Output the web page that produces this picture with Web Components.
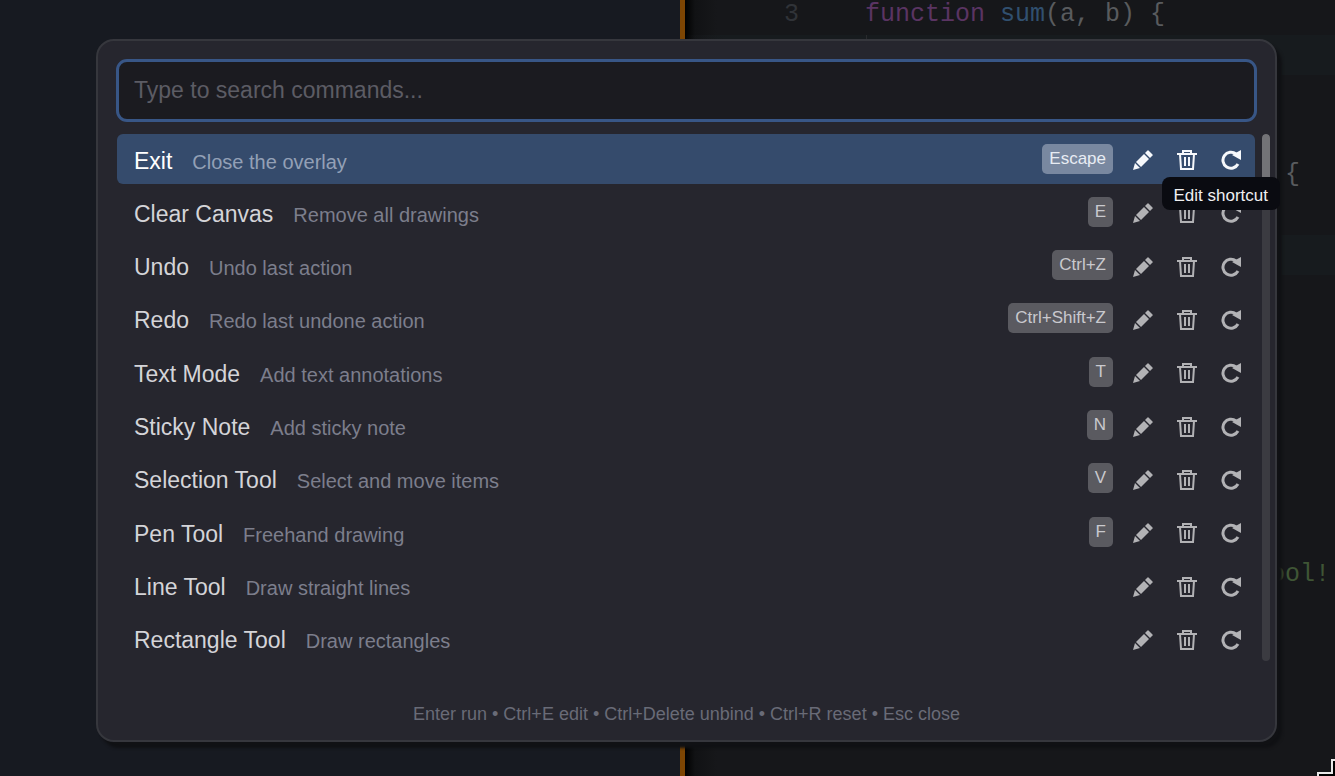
<!DOCTYPE html>
<html lang="en">
<head>
<meta charset="utf-8">
<title>Command palette</title>
<style>
html, body { margin: 0; height: 100%; }
body { font-family: "Liberation Sans", Arial, sans-serif; background: #171a21; overflow: hidden; }
</style>
</head>
<body>
<overlay-app></overlay-app>
<script>
const define = (name, html, setup) => customElements.define(name, class extends HTMLElement {
  connectedCallback() {
    if (this.shadowRoot) return;
    this.attachShadow({ mode: 'open' }).innerHTML = html;
    if (setup) setup(this, this.shadowRoot);
  }
});

const icons = {
  edit: '<path d="M0 20l2-7 5 5z"/><path d="M3 12l8-8 5 5-8 8z"/><path d="M12 3l2.500-2.500q.5-.5 1 0l4 4q.5.5 0 1L17 8z"/>',
  unbind: '<path fill="none" stroke="currentColor" stroke-width="2" d="M0 4h20M6 3V1h8v2M3 4l1 15h12l1-15"/><path fill="none" stroke="currentColor" stroke-width="2" d="M8 7v9M12 7v9"/>',
  reset: '<path fill="none" stroke="currentColor" stroke-width="3" d="M15 4A8 8 0 1 0 17 14"/><path d="M20 0v10l-9-5z"/>'
};

define('icon-button', `<style>
  :host { display: block; }
  button { display: grid; place-items: center; width: 36px; height: 36px; padding: 0; border: 0; background: none; color: inherit; }
  svg { width: 20px; height: 20px; fill: currentColor; }
</style><button type="button"><svg viewBox="0 0 20 20" aria-hidden="true"></svg></button>`, (el, root) => {
  root.querySelector('svg').innerHTML = icons[el.getAttribute('kind')];
  root.querySelector('button').setAttribute('aria-label', el.getAttribute('label'));
});

define('key-badge', `<style>
  :host { display: block; box-sizing: border-box; height: 30px; margin-bottom: 1px; padding: 0 7px; border-radius: 5px;
    background: var(--badge-bg, #5a5a60); color: var(--badge-fg, #c9c9ce); font-size: 17px; line-height: 30px; }
</style><slot></slot>`);

define('command-row', `<style>
  :host { display: flex; align-items: center; position: relative; box-sizing: border-box; height: 50px; padding: 0 6px 0 17px;
    border-radius: 6px; color: #d4d4d8; --desc: #7c7e8c; --icon: #b2b2b5; }
  :host([selected]) { background: #354b6c; color: #fff; --desc: #93a0b6; --icon: #f6f8fb; --badge-bg: #7988a0; --badge-fg: #e8ecf3; }
  .text { display: flex; flex: 1; align-items: baseline; gap: 20px; white-space: nowrap; padding-top: 4px; }
  .name { font-size: 23px; line-height: 28px; }
  .desc { font-size: 20px; line-height: 28px; color: var(--desc); }
  .actions { display: flex; gap: 8px; margin-left: 12px; padding-top: 2px; color: var(--icon); }
  ::slotted([slot=tip]) { position: absolute; z-index: 2; right: -25px; top: 43px; }
</style><div class="text"><span class="name"></span><span class="desc"></span></div>
<slot></slot>
<div class="actions"><icon-button kind="edit" label="Edit shortcut"></icon-button><icon-button kind="unbind" label="Unbind shortcut"></icon-button><icon-button kind="reset" label="Reset shortcut"></icon-button></div>
<slot name="tip"></slot>`, (el, root) => {
  root.querySelector('.name').textContent = el.getAttribute('name');
  root.querySelector('.desc').textContent = el.getAttribute('desc');
});

define('tool-tip', `<style>
  :host { display: block; padding: 7px 12px 2px; border-radius: 8px; background: #0a0b11; color: #f0f0f2;
    font-size: 17px; line-height: 24px; white-space: nowrap; }
</style><slot></slot>`);

define('search-field', `<style>
  :host { display: block; }
  input { display: block; box-sizing: border-box; width: 100%; height: 63px; padding: 0 15px; border: 3px solid #385686; border-radius: 11px;
    background: #1b1b20; color: #d4d4d8; font: 23px "Liberation Sans", Arial, sans-serif; outline: 0; }
  input::placeholder { color: #5c5c64; opacity: 1; }
</style><input type="text" aria-label="Search commands" placeholder="Type to search commands...">`);

define('scroll-track', `<style>
  :host { display: block; width: 8px; height: 527px; border-radius: 4px; background: #3b3b41; overflow: hidden; }
  div { height: 64px; border-radius: 4px; background: #737377; }
</style><div></div>`);

define('command-palette', `<style>
  :host { display: block; box-sizing: border-box; padding: 18px 18px 0; border: 2px solid #36373d; border-radius: 18px;
    background: #26262e; box-shadow: 5px 6px 3px #101114; }
  .body { display: flex; justify-content: space-between; gap: 7px; margin: 12px -13px 0 0; }
  .list { display: flex; flex: 1; flex-direction: column; justify-content: space-between; height: 530px; margin-left: 1px; }
  footer { margin-top: 36px; padding-bottom: 12px; text-align: center; font-size: 18px; line-height: 28px; color: #696b77; }
</style>
<search-field></search-field>
<div class="body"><div class="list"><slot></slot></div><scroll-track></scroll-track></div>
<footer>Enter run • Ctrl+E edit • Ctrl+Delete unbind • Ctrl+R reset • Esc close</footer>`);

define('code-line', `<style>
  :host { display: flex; flex: none; height: 40px; line-height: 40px; white-space: pre; }
  .no { box-sizing: border-box; width: 180px; padding-left: 99px; color: #303338; }
</style><span class="no"></span><div><slot></slot></div>`, (el, root) => {
  root.querySelector('.no').textContent = el.getAttribute('no') || '';
});

define('code-backdrop', `<style>
  :host { display: grid; grid-template-columns: 685px 1fr; height: 100%; font: 25px "Liberation Mono", monospace; color: #595b5e; }
  .left { border-right: 5px solid #7d4503; background: #171a21; }
  .code { overflow: hidden; background: linear-gradient(90deg, #000, #111214 10px, #16171a 32px); }
  .lines { display: flex; flex-direction: column; margin-top: -5px; }
  .kw { color: #5a3462; } .fn { color: #31506f; } .str { color: #3f5535; padding-left: 27ch; }
  .far { padding-left: 28ch; }
  .hl { background: linear-gradient(90deg, transparent, #171b1e 40px); }
  .guide { display: block; width: 1px; height: 40px; margin-left: 1px; background: #292a2d; }
</style>
<div class="left"></div>
<div class="code"><div class="lines">
<code-line no="3"><span class="kw">function</span> <span class="fn">sum</span>(a, b) {</code-line>
<code-line class="hl"><span class="guide"></span></code-line>
<code-line></code-line><code-line></code-line>
<code-line><span class="far">{</span></code-line>
<code-line></code-line>
<code-line class="hl"></code-line>
<code-line></code-line><code-line></code-line><code-line></code-line><code-line></code-line><code-line></code-line><code-line></code-line><code-line></code-line>
<code-line><span class="str">ool!</span></code-line>
</div></div>`);

define('overlay-app', `<style>
  :host { display: grid; height: 100vh; overflow: hidden; position: relative; }
  code-backdrop, .stage { grid-area: 1 / 1; min-width: 0; min-height: 0; }
  .stage { z-index: 1; padding: 39px 58px 0 96px; }
  .corner { position: absolute; right: 0; bottom: 0; width: 18px; height: 17px; z-index: 3; }
</style>
<code-backdrop></code-backdrop>
<div class="stage"><command-palette>
<command-row selected name="Exit" desc="Close the overlay"><key-badge>Escape</key-badge><tool-tip slot="tip" role="tooltip">Edit shortcut</tool-tip></command-row>
<command-row name="Clear Canvas" desc="Remove all drawings"><key-badge>E</key-badge></command-row>
<command-row name="Undo" desc="Undo last action"><key-badge>Ctrl+Z</key-badge></command-row>
<command-row name="Redo" desc="Redo last undone action"><key-badge>Ctrl+Shift+Z</key-badge></command-row>
<command-row name="Text Mode" desc="Add text annotations"><key-badge>T</key-badge></command-row>
<command-row name="Sticky Note" desc="Add sticky note"><key-badge>N</key-badge></command-row>
<command-row name="Selection Tool" desc="Select and move items"><key-badge>V</key-badge></command-row>
<command-row name="Pen Tool" desc="Freehand drawing"><key-badge>F</key-badge></command-row>
<command-row name="Line Tool" desc="Draw straight lines"></command-row>
<command-row name="Rectangle Tool" desc="Draw rectangles"></command-row>
</command-palette></div>
<svg class="corner" viewBox="0 0 18 17" aria-hidden="true"><path d="M18 1h-3v13H1v3h17z" fill="#000"/><path d="M18 1h-3v13H1v3" fill="none" stroke="#e8e8e8" stroke-width="2"/></svg>`);
</script>
</body>
</html>
